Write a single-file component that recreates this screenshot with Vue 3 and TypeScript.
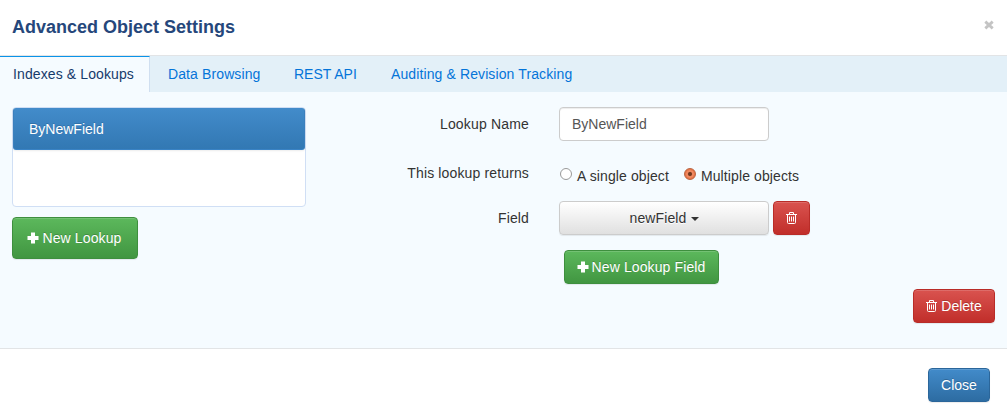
<script setup lang="ts">
import { ref } from 'vue'

const tabs = ['Indexes & Lookups', 'Data Browsing', 'REST API', 'Auditing & Revision Tracking']
const activeTab = ref(0)
const lookupName = ref('ByNewField')
const returns = ref<'single' | 'multiple'>('multiple')
</script>

<template>
  <div class="modal">
    <header class="head">
      <h4>Advanced Object Settings</h4>
      <button class="dismiss" aria-label="Dismiss">
        <svg width="10" height="10" viewBox="0 0 10 10"><path d="M1.3 1.600 8.7 8.4M8.7 1.600 1.3 8.4" /></svg>
      </button>
    </header>

    <nav class="tabs">
      <a v-for="(tab, i) in tabs" :key="tab" :class="['tab', 't' + i, { active: i === activeTab }]" @click="activeTab = i"><span>{{ tab }}</span></a>
    </nav>

    <main class="body">
      <section class="side">
        <div class="list"><div class="item">{{ lookupName }}</div></div>
        <button class="btn green large">
          <svg class="plus" width="12" height="12" viewBox="0 0 12 12"><path d="M4 .5h4V4h3.500v4H8v3.500H4V8H.5V4H4z" /></svg>
          <span>New Lookup</span>
        </button>
      </section>

      <section class="form">
        <div class="row name-row">
          <label class="wide">Lookup Name</label>
          <input v-model="lookupName" class="field" type="text" />
        </div>
        <div class="row radio-row">
          <label>This lookup returns</label>
          <div class="radios">
            <span class="option" @click="returns = 'single'"><i :class="['radio', { on: returns === 'single' }]"></i><span>A single object</span></span>
            <span class="option" @click="returns = 'multiple'"><i :class="['radio', { on: returns === 'multiple' }]"></i><span>Multiple objects</span></span>
          </div>
        </div>
        <div class="row field-row">
          <label>Field</label>
          <button class="btn select"><span>newField</span><i class="caret"></i></button>
          <button class="btn red square" aria-label="Remove field">
            <svg class="trash" width="11" height="12" viewBox="0 0 11 12"><path d="M0 2.500h11M3.500 2.500v-2h4v2M1.500 2.500v8q0 1 1 1h6q1 0 1-1v-8M3.500 4.500v5M5.500 4.500v5M7.500 4.500v5" /></svg>
          </button>
        </div>
        <button class="btn green add">
          <svg class="plus" width="12" height="12" viewBox="0 0 12 12"><path d="M4 .5h4V4h3.500v4H8v3.500H4V8H.5V4H4z" /></svg>
          <span>New Lookup Field</span>
        </button>
        <button class="btn red delete">
          <svg class="trash" width="11" height="12" viewBox="0 0 11 12"><path d="M0 2.500h11M3.500 2.500v-2h4v2M1.500 2.500v8q0 1 1 1h6q1 0 1-1v-8M3.500 4.500v5M5.500 4.500v5M7.500 4.500v5" /></svg>
          <span>Delete</span>
        </button>
      </section>
    </main>

    <footer class="foot"><button class="btn blue close">Close</button></footer>
  </div>
</template>

<style>
body { margin: 0; background: #fff; overflow: hidden; }
</style>

<style scoped>
* { box-sizing: border-box; }
.modal { width: 1007px; height: 418px; display: flex; flex-direction: column; font: 14px/20px "Liberation Sans", Arial, sans-serif; color: #333; background: #fff; }
.head { height: 56px; flex: none; display: flex; justify-content: space-between; align-items: flex-start; padding: 16px 13px 0 12px; border-bottom: 1px solid #e2e4e6; }
h4 { margin: 0; font-size: 18px; line-height: 22px; color: #25477b; font-weight: bold; }
.dismiss { border: 0; background: none; padding: 0; margin-top: 4px; display: flex; }
.dismiss path { stroke: #c4c4c4; stroke-width: 2.8; fill: none; }
.tabs { height: 36px; flex: none; display: flex; background: #e3f0f8; }
.tab { color: #0474d8; padding: 7px 17px 0 17px; border-top: 1px solid transparent; white-space: nowrap; cursor: pointer; letter-spacing: .11px; }
.tab.active { background: #f5fbff; color: #163a6b; border-top-color: #0a93e8; border-right: 1px solid #d0dff0; }
.t0 { width: 150px; padding-left: 13px; padding-right: 0; }
.t1 { width: 127px; padding-left: 18px; }
.t2 { width: 97px; letter-spacing: 0; }
.body { height: 256px; flex: none; display: flex; background: #f5fbff; padding: 15px 12px 0; }
.side { width: 294px; flex: none; display: flex; flex-direction: column; align-items: flex-start; }
.list { width: 294px; height: 100px; background: #fff; border: 1px solid #d0dff5; border-radius: 4px; margin-bottom: 10px; }
.item { height: 42px; padding: 10px 15px; color: #fff; border: 1px solid; border-color: #428bca #3b80bd #3983c5; border-radius: 3px; background: linear-gradient(#428bca, #3278b3); text-shadow: 0 -1px 0 #3071a9; box-shadow: 0 1px 2px rgba(0,0,0,.075); }
.form { flex: 1; display: flex; flex-direction: column; }
.row { display: flex; }
.row label { width: 223px; margin-right: 30px; text-align: right; padding-top: 7px; flex: none; letter-spacing: .14px; }
.row label.wide { letter-spacing: .17px; }
.name-row { height: 49px; }
.field { width: 210px; height: 34px; padding: 6px 12px; font: inherit; color: #555; border: 1px solid #ccc; border-radius: 4px; background: #fff; box-shadow: inset 0 1px 1px rgba(0,0,0,.075); outline: none; }
.radio-row { height: 45px; }
.radios { display: flex; padding-top: 10px; gap: 14px; letter-spacing: .11px; }
.option { display: flex; gap: 5px; }
.radio { width: 12px; height: 12px; border-radius: 50%; border: 1px solid #999; background: #fff; margin: 2px 0 0 1px; }
.radio.on { border-color: #b9623f; background: radial-gradient(circle, #70391f 0 1.500px, #b35c3b 2px, #f08a62 2.600px 3.500px, #e97648 4px 5px); }
.field-row { height: 49px; }
.btn { display: flex; align-items: center; justify-content: center; height: 34px; flex: none; padding: 0; font: inherit; color: #fff; border: 1px solid; border-radius: 4px; white-space: nowrap; text-shadow: 0 -1px 0 rgba(0,0,0,.2); box-shadow: inset 0 1px 0 rgba(255,255,255,.15), 0 1px 1px rgba(0,0,0,.075); }
.green { background: linear-gradient(#5cb85c, #419641); border-color: #3e8f3e; gap: 3px; letter-spacing: .12px; }
.red { background: linear-gradient(#d9534f, #c12e2a); border-color: #b92c28; gap: 4px; }
.blue { background: linear-gradient(#428bca, #2d6ca2); border-color: #2b669a; }
.large { width: 126px; height: 42px; }
.select { width: 210px; color: #333; border-color: #ccc; background: linear-gradient(#fff, #e0e0e0); text-shadow: 0 1px 0 #fff; gap: 4px; letter-spacing: .12px; }
.caret { border: 4px solid transparent; border-top-color: #333; border-bottom: 0; margin-top: 2px; }
.square { width: 37px; margin-left: 4px; }
.add { width: 155px; margin-left: 258px; padding-right: 1px; }
.large { padding-right: 1px; }
.delete { width: 82px; align-self: flex-end; margin-top: 5px; }
.plus path { fill: #fff; }
.trash path { fill: none; stroke: #fff; stroke-width: 1; }
.foot { flex: 1; border-top: 1px solid #e2e4e6; display: flex; justify-content: flex-end; padding: 19px 17px 0 0; }
.close { width: 62px; }
</style>
